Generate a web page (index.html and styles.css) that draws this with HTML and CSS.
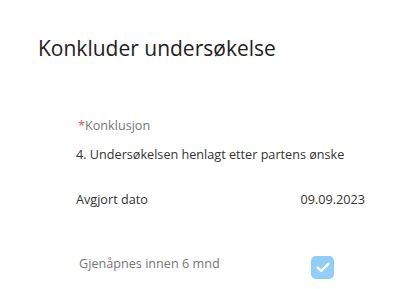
FILE: index.html
```html
<!DOCTYPE html>
<html lang="no">
<head>
<meta charset="utf-8">
<title>Konkluder undersøkelse</title>
<link rel="stylesheet" href="styles.css">
</head>
<body>
<div class="page">
  <h1 class="title">Konkluder undersøkelse</h1>
  <div class="form">
    <div class="field">
      <div class="label"><span class="req">*</span>Konklusjon</div>
      <div class="value">4. Undersøkelsen henlagt etter partens ønske</div>
    </div>
    <div class="row date-row">
      <span class="row-label">Avgjort dato</span>
      <span class="row-value">09.09.2023</span>
    </div>
    <div class="row check-row">
      <span class="check-label">Gjenåpnes innen 6 mnd</span>
      <span class="checkbox" role="checkbox" aria-checked="true">
        <svg width="14" height="11" viewBox="0 0 14 11"><path d="M1.6 5.6 L5.2 9 L12.4 1.8" fill="none" stroke="#fff" stroke-width="2.4" stroke-linecap="round" stroke-linejoin="round"/></svg>
      </span>
    </div>
  </div>
</div>
</body>
</html>
```

FILE: styles.css
```css
html, body {
  margin: 0;
  padding: 0;
  background: #ffffff;
}
body {
  font-family: "Open Sans", "Noto Sans", sans-serif;
  color: #333;
}
.page {
  width: 399px;
  height: 289px;
  overflow: hidden;
}
.title {
  margin: 34px 0 0 38px;
  font-size: 21px;
  font-weight: 400;
  line-height: 28px;
  color: #222;
}
.form {
  margin: 54px 0 0 76px;
  width: 289px;
  font-size: 12.65px;
  line-height: 18px;
}
.label {
  color: #777;
  padding-left: 2px;
}
.req {
  color: #d9534f;
}
.value {
  margin-top: 11px;
  color: #333;
}
.row {
  display: flex;
  justify-content: space-between;
}
.date-row {
  margin-top: 27px;
  color: #333;
}
.check-row {
  margin-top: 46px;
  align-items: flex-start;
  padding-left: 3px;
}
.check-label {
  color: #777;
}
.checkbox {
  display: flex;
  align-items: center;
  justify-content: center;
  width: 23px;
  height: 23px;
  margin: 2px 31px 0 0;
  border-radius: 5px;
  background: #90cdf9;
}
```
